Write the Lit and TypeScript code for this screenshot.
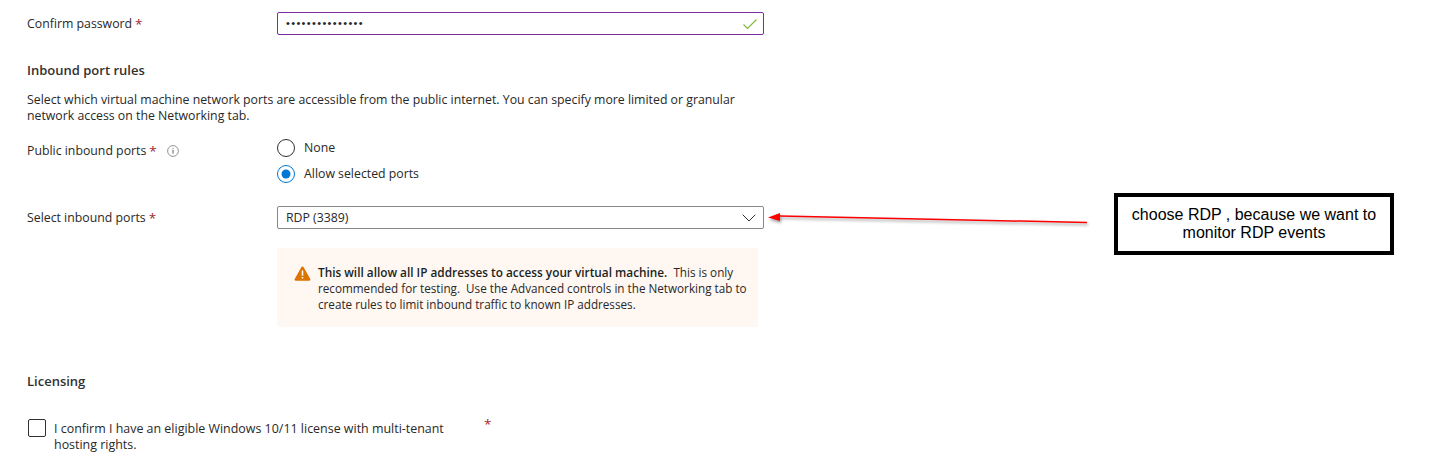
import { LitElement, html, css, svg } from "lit";
import { customElement } from "lit/decorators.js";

@customElement("app-root")
export class AppRoot extends LitElement {
  static styles = css`
    :host {
      display: block;
      position: relative;
      width: 1437px;
      height: 469px;
      overflow: hidden;
      background: #fff;
      color: #292827;
      font-family: "Open Sans", "Noto Sans", sans-serif;
      font-size: 12.3px;
      line-height: 16px;
    }
    .form {
      display: flex;
      flex-direction: column;
      width: 737px;
      padding: 12px 0 0 27px;
    }
    .row {
      display: grid;
      grid-template-columns: 250px 487px;
    }
    .req { color: #a4262c; font-size: 13.5px; }
    .label { display: flex; align-items: center; height: 23px; gap: 3px; }
    .input {
      box-sizing: border-box;
      height: 23px;
      border: 1px solid #7a2da0;
      border-radius: 2px;
      display: flex;
      align-items: center;
      justify-content: space-between;
      padding: 0 5px 0 8px;
    }
    .dots { font-size: 11px; letter-spacing: 1.35px; font-family: "Liberation Sans", sans-serif; position: relative; top: -1px; }
    h2 {
      margin: 27px 0 0;
      font-size: 13px;
      font-weight: 600;
      line-height: 16px;
      color: #323130;
    }
    .desc { margin: 14px 0 0; width: 720px; }
    .ports { margin-top: 15px; }
    .ports .label { height: 16px; margin-top: 4px; gap: 3px; }
    .info { margin-left: 7px; }
    .radios { display: flex; flex-direction: column; gap: 8px; }
    .radio { display: flex; align-items: center; gap: 9px; height: 18px; }
    .select-row { margin-top: 23px; }
    .select {
      box-sizing: border-box;
      height: 23px;
      border: 1px solid #8a8886;
      border-radius: 2px;
      display: flex;
      align-items: center;
      justify-content: space-between;
      padding: 0 7px 0 8px;
    }
    .warn {
      box-sizing: border-box;
      grid-column: 2;
      margin-top: 19px;
      width: 481px;
      height: 79px;
      background: #fef7f2;
      border-radius: 2px;
      display: flex;
      gap: 7px;
      padding: 16px 7px 0 17px;
      font-size: 11.7px;
    }
    .warn svg { flex: none; margin-top: 2px; }
    .warn b { font-weight: 600; font-size: 11.8px; color: #201f1e; }
    .lic { margin-top: 46px; }
    .check-row { display: flex; margin-top: 29px; margin-left: 1px; }
    .box {
      box-sizing: border-box;
      flex: none;
      width: 18px;
      height: 18px;
      border: 1px solid #323130;
      border-radius: 2px;
      margin-top: 1px;
    }
    .check-text { margin-left: 8px; width: 400px; margin-top: 3px; font-size: 12.45px; }
    .req-far { margin-left: 30px; margin-top: -2px; }
    .arrow { position: absolute; left: 760px; top: 205px; filter: drop-shadow(1px 2px 1.500px rgba(0,0,0,.4)); }
    .note {
      position: absolute;
      box-sizing: border-box;
      left: 1114px;
      top: 193px;
      width: 280px;
      height: 62px;
      border: 4px solid #000;
      background: #fff;
      color: #000;
      font-family: "Liberation Sans", Arial, sans-serif;
      font-size: 16px;
      line-height: 18px;
      text-align: center;
      padding: 9px 10px 0;
    }
  `;

  render() {
    return html`
      <div class="form">
        <div class="row">
          <div class="label">Confirm password <span class="req">*</span></div>
          <div class="input">
            <span class="dots">•••••••••••••••</span>
            <svg width="16" height="12" viewBox="0 0 16 12"><path d="M1.500 6.500 5.500 10.500 14.500 1.500" fill="none" stroke="#7fba3c" stroke-width="1.200"/></svg>
          </div>
        </div>
        <h2>Inbound port rules</h2>
        <p class="desc">Select which virtual machine network ports are accessible from the public internet. You can specify more limited or granular network access on the Networking tab.</p>
        <div class="row ports">
          <div class="label">Public inbound ports <span class="req">*</span>
            <svg class="info" width="12" height="12" viewBox="0 0 12 12"><circle cx="6" cy="6" r="5.400" fill="none" stroke="#8a8886" stroke-width=".9"/><path d="M6 5v3.600M6 3.200v1" stroke="#605e5c" stroke-width="1"/></svg>
          </div>
          <div class="radios">
            <div class="radio">
              <svg width="18" height="18" viewBox="0 0 18 18"><circle cx="9" cy="9" r="8.500" fill="#fff" stroke="#323130"/></svg>None
            </div>
            <div class="radio">
              <svg width="18" height="18" viewBox="0 0 18 18"><circle cx="9" cy="9" r="8.500" fill="#fff" stroke="#0078d4"/><circle cx="9" cy="9" r="4.500" fill="#0078d4"/></svg>Allow selected ports
            </div>
          </div>
        </div>
        <div class="row select-row">
          <div class="label">Select inbound ports <span class="req">*</span></div>
          <div class="select">RDP (3389)
            <svg width="14" height="8" viewBox="0 0 14 8"><path d="M.7.700 7 7 13.300.7" fill="none" stroke="#323130" stroke-width="1"/></svg>
          </div>
          <div class="warn">
            <svg width="17" height="15" viewBox="0 0 17 15"><path d="M8.500.5a1.200 1.200 0 0 1 1 .6l6.800 11.800a1.200 1.200 0 0 1-1 1.800H1.700a1.200 1.200 0 0 1-1-1.800L7.500 1.100a1.200 1.200 0 0 1 1-.6z" fill="#db7500"/><path d="M8.500 4.500v5.200M8.500 11v1.500" stroke="#fff" stroke-width="1.500"/></svg>
            <div><b>This will allow all IP addresses to access your virtual machine.</b>&nbsp; This is only recommended for testing.&nbsp; Use the Advanced controls in the Networking tab to create rules to limit inbound traffic to known IP addresses.</div>
          </div>
        </div>
        <h2 class="lic">Licensing</h2>
        <div class="check-row">
          <div class="box"></div>
          <div class="check-text">I confirm I have an eligible Windows 10/11 license with multi-tenant hosting rights.</div>
          <span class="req req-far">*</span>
        </div>
      </div>
      <svg class="arrow" width="340" height="30" viewBox="0 0 340 30">
        ${svg`<path d="M20 11 327 17.500" stroke="#f00" stroke-width="1.500"/>
        <path d="M8 12.500 20 8 20 16z" fill="#f00"/>`}
      </svg>
      <div class="note">choose RDP , because we want to monitor RDP events</div>
    `;
  }
}
